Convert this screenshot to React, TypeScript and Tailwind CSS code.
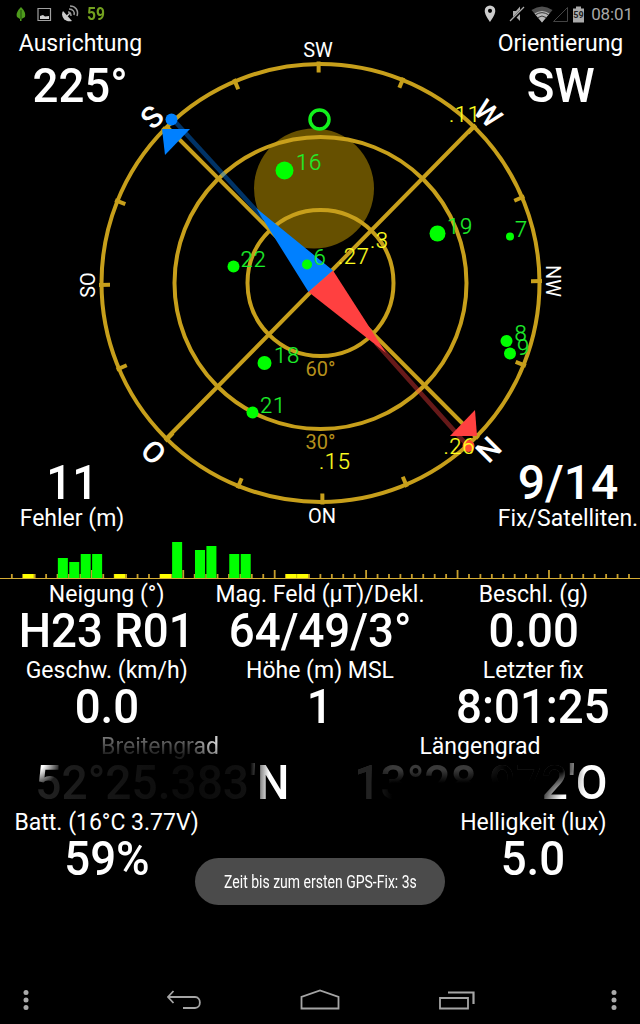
import clsx from "clsx";

const satellites = [
  { id: 16, x: 284.5, y: 170.5, r: 9, tx: 296, ty: 170 },
  { id: 19, x: 437.5, y: 233.5, r: 8, tx: 447, ty: 233.5 },
  { id: 7, x: 510, y: 236.5, r: 4, tx: 515, ty: 236.5 },
  { id: 22, x: 233.5, y: 266.5, r: 6, tx: 240.5, ty: 266.5 },
  { id: 6, x: 307, y: 264.5, r: 5, tx: 313.5, ty: 264.5 },
  { id: 8, x: 506.5, y: 341, r: 6, tx: 514.5, ty: 341 },
  { id: 9, x: 510, y: 353.5, r: 6, tx: 517, ty: 354.5 },
  { id: 18, x: 264.5, y: 363, r: 7, tx: 274, ty: 363 },
  { id: 21, x: 252.5, y: 412.5, r: 6, tx: 260, ty: 413 },
];

const unfixed = [
  { id: ".11", x: 449, y: 121.5 },
  { id: ".3", x: 370, y: 247.5 },
  { id: ".27", x: 338, y: 264 },
  { id: ".26", x: 443.5, y: 453.5 },
  { id: ".15", x: 319, y: 468.5 },
];

const labels = [
  { text: "S", x: 152, y: 117, angle: -45, size: 30, weight: 500 },
  { text: "W", x: 488, y: 113.5, angle: 45, size: 29, weight: 500 },
  { text: "N", x: 488.5, y: 449.5, angle: -45, size: 30, weight: 500 },
  { text: "O", x: 153.5, y: 452, angle: 45, size: 30, weight: 500 },
  { text: "SW", x: 318, y: 49.5, angle: 0, size: 20, weight: 400 },
  { text: "NW", x: 553, y: 281, angle: 90, size: 20, weight: 400 },
  { text: "SO", x: 87.5, y: 285, angle: -90, size: 20, weight: 400 },
  { text: "ON", x: 322, y: 516, angle: 0, size: 20, weight: 400 },
];

// signal strength per satellite slot, in pixels
const signals: Record<number, number> = {
  6: 20, 7: 16, 8: 24, 9: 24, 16: 36, 18: 28, 19: 32, 21: 24, 22: 24,
};
const weak = [3, 11, 15, 26, 27];
const SLOT = 640 / 56;

function Compass() {
  return (
    <svg viewBox="0 28 640 510" className="col-start-1 row-start-1 h-[510px] w-full" fontFamily="Roboto, sans-serif">
      <circle cx="314" cy="188.5" r="60" fill="#665000" />
      <g fill="none" stroke="#c79f1b" strokeWidth="4">
        <circle cx="320.5" cy="283" r="219" />
        <circle cx="320.5" cy="283" r="146" />
        <circle cx="320.5" cy="283" r="73" />
        <path d="M167 127L476 437M474 126L167 438" />
        <g transform="rotate(-0.5 320.5 283)">
          {Array.from({ length: 16 }, (_, i) => (
            <path key={i} d="M320.5 61.500v11" transform={`rotate(${i * 22.5} 320.5 283)`} />
          ))}
        </g>
      </g>
      <g fill="#b5901c" fontSize="20" textAnchor="middle">
        <text x="320.5" y="376">60°</text>
        <text x="320.5" y="449">30°</text>
      </g>
      <g fill="#fff" textAnchor="middle">
        {labels.map((l) => (
          <text key={l.text} fontSize={l.size} fontWeight={l.weight} transform={`translate(${l.x} ${l.y}) rotate(${l.angle})`} y={l.size * 0.355}>
            {l.text}
          </text>
        ))}
      </g>
      <path d="M174 120.500L264 219" stroke="#0080ff" strokeWidth="4.500" opacity="0.4" />
      <path d="M256 208L333 270.5L308.5 292Z" fill="#0080ff" />
      <path d="M162 129H190L165 155Z" fill="#0080ff" />
      <circle cx="171.5" cy="119.5" r="6" fill="#0080ff" />
      <path d="M376 343L467 445" stroke="#ff4040" strokeWidth="4.500" opacity="0.4" />
      <path d="M386 353L333 270.5L308.5 292Z" fill="#ff4040" />
      <path d="M475 410L477 436H450Z" fill="#ff4040" />
      <circle cx="468.5" cy="446" r="6" fill="#ff5030" />
      <circle cx="319.5" cy="119.5" r="9.5" fill="none" stroke="#12f01c" strokeWidth="3.5" />
      <g fill="#00ff00">
        {satellites.map((s) => (
          <circle key={s.id} cx={s.x} cy={s.y} r={s.r} />
        ))}
      </g>
      <g fontSize="22" fontWeight="300" letterSpacing="0.8" fill="#1ef02c" stroke="#1ef02c" strokeWidth="0.2">
        {satellites.map((s) => (
          <text key={s.id} x={s.tx} y={s.ty}>{s.id}</text>
        ))}
      </g>
      <g fontSize="22" fontWeight="300" letterSpacing="0.6" fill="#ffff20" stroke="#ffff20" strokeWidth="0.2">
        {unfixed.map((s) => (
          <text key={s.id} x={s.x} y={s.y}>{s.id}</text>
        ))}
      </g>
    </svg>
  );
}

function SignalChart() {
  return (
    <svg viewBox="0 538 640 42" className="h-[42px] w-full">
      {Array.from({ length: 55 }, (_, n) => n + 1).map((i) => (
        <rect key={i} x={i * SLOT - 0.5} y={i % 8 === 0 ? 570 : 574} width="1.8" height={i % 8 === 0 ? 8 : 4} fill="#c79f2c" />
      ))}
      {Object.entries(signals).map(([id, h]) => (
        <rect key={id} x={(Number(id) - 1) * SLOT + 0.7} y={578 - h} width="10" height={h} fill="#00ff00" />
      ))}
      {weak.map((id) => (
        <rect key={id} x={(id - 1) * SLOT} y="574" width="11" height="4" fill="#ffff00" />
      ))}
      <rect y="578" width="640" height="1" fill="#d5ad35" />
    </svg>
  );
}

function Reading({ label, value, className }: { label: string; value: string; className?: string }) {
  return (
    <div className={clsx("flex flex-col items-center whitespace-nowrap", className)}>
      <span className="text-[23px] leading-7">{label}</span>
      <span className="scale-x-95 text-[48px] font-medium leading-[44px]">{value}</span>
    </div>
  );
}

function StatusBar() {
  return (
    <header className="flex h-7 items-center justify-between pl-[15px] pr-[7px]">
      <div className="flex items-center">
        <svg width="12" height="16" viewBox="0 0 12 16">
          <path d="M6 1C2 5 1 8 2 11L5 13V15H6.500V13L10 11C11 7 9 4 6 1Z" fill="#4d9a1c" />
          <path d="M6 4V13" stroke="#1d4a08" />
        </svg>
        <svg className="ml-[10px]" width="15" height="15" viewBox="0 0 15 15">
          <path d="M1 1.500H13.500V13.500H1Z" fill="none" stroke="#a0a0a0" strokeWidth="1.200" />
          <path d="M3 12V9L6 8L8 9.500L12 9V12Z" fill="#d0d0d0" />
        </svg>
        <svg className="ml-[9px]" width="19" height="18" viewBox="0 0 19 18">
          <path d="M2 6C-1 11 4 18 11 16Z" fill="#ccc" />
          <path d="M6 11L9 8" stroke="#ccc" strokeWidth="1.500" />
          <path d="M7 7C9 7 10 9 10 11M8 4C12 4 14 7 13 10M9 1C14 1 18 5 16 11" fill="none" stroke="#999" strokeWidth="1.500" />
        </svg>
        <span className="ml-[7px] origin-left scale-x-[0.82] text-[19px] font-bold leading-7 text-[#73a01f]">59</span>
      </div>
      <div className="flex items-center">
        <svg width="12" height="18" viewBox="0 0 12 18">
          <path d="M6 0.500A5.300 5.300 0 0 0 0.700 6C0.700 10 6 17 6 17S11.300 10 11.300 6A5.300 5.300 0 0 0 6 0.500ZM6 3.800A2 2 0 1 1 6 7.900A2 2 0 1 1 6 3.800Z" fill="#ccc" fillRule="evenodd" />
        </svg>
        <svg className="ml-[13px]" width="17" height="18" viewBox="0 0 17 18">
          <path d="M4 6H7L11 1.500V16L7 12H4Z" fill="#aaa" />
          <path d="M15 3L1 17" stroke="#000" strokeWidth="3" />
          <path d="M15 2L1 16" stroke="#aaa" strokeWidth="1.300" />
        </svg>
        <svg className="ml-[5px]" width="22" height="17" viewBox="0 0 22 17">
          <path d="M0.500 4Q11 -3 21.500 4L11 16.500Z" fill="#505050" />
          <path d="M3.500 7.500Q11 2.500 18.500 7.500L11 16.500Z" fill="#b8b8b8" />
          <path d="M4.500 8.800Q11 4.500 17.500 8.800M7 11.500Q11 8.500 15 11.500" fill="none" stroke="#333" />
        </svg>
        <svg className="-ml-px" width="17" height="17" viewBox="0 0 17 17">
          <path d="M15.500 1.500V15.500H1.500Z" fill="none" stroke="#444" />
        </svg>
        <svg className="ml-[3px]" width="13" height="17" viewBox="0 0 13 17">
          <path d="M4 0.500H9V2.500H12V16.500H1V2.500H4Z" fill="#aaa" />
          <text x="6.500" y="11.500" textAnchor="middle" fontSize="9" fontWeight="700" fill="#222">59</text>
        </svg>
        <span className="ml-[6px] text-[17px] leading-7 tracking-[-0.1px] text-[#a8a8a8]">08:01</span>
      </div>
    </header>
  );
}

function MenuDots() {
  return (
    <svg width="6" height="22" viewBox="0 0 6 22" fill="#aaa">
      <circle cx="3" cy="3.500" r="2.500" />
      <circle cx="3" cy="11" r="2.500" />
      <circle cx="3" cy="18.500" r="2.500" />
    </svg>
  );
}

function NavBar() {
  return (
    <nav className="flex h-12 items-center justify-between px-[23px]">
      <MenuDots />
      <div className="flex items-center gap-[99px]">
        <svg width="36" height="22" viewBox="0 0 36 22" fill="none" stroke="#a5a5a5" strokeWidth="1.800">
          <path d="M8.500 2L3 8L8.500 14M3 8H30C36.500 8 36.500 19 30 19H18" />
        </svg>
        <svg width="40" height="22" viewBox="0 0 40 22" fill="none" stroke="#a5a5a5" strokeWidth="1.800">
          <path d="M1.500 19.500V8L20 1.500L38.500 8V19.500Z" />
        </svg>
        <svg width="36" height="22" viewBox="0 0 36 22" fill="none" stroke="#a5a5a5" strokeWidth="1.800">
          <path d="M1 9H29V19.500H1Z" />
          <path d="M9 3.500H34.500V15" strokeWidth="2.200" />
        </svg>
      </div>
      <MenuDots />
    </nav>
  );
}

export default function App() {
  return (
    <div className="relative flex h-[1024px] w-[640px] flex-col overflow-hidden bg-black font-[Roboto,sans-serif] text-white">
      <StatusBar />

      <section className="grid h-[510px]">
        <Compass />
        <div className="col-start-1 row-start-1 flex flex-col justify-between pt-[2px]">
          <div className="flex justify-between">
            <Reading label="Ausrichtung" value="225°" className="w-[161px] gap-1.5" />
            <Reading label="Orientierung" value="SW" className="w-[159px] gap-1.5" />
          </div>
          <div className="flex justify-between pb-[5px]">
            <div className="flex w-36 flex-col items-center">
              <span className="scale-x-95 text-[48px] font-medium leading-[44px]">11</span>
              <span className="text-[23px] leading-7">Fehler (m)</span>
            </div>
            <div className="flex w-36 flex-col items-center">
              <span className="text-[48px] font-medium leading-[44px]">9/14</span>
              <span className="text-[23px] leading-7">Fix/Satelliten.</span>
            </div>
          </div>
        </div>
      </section>

      <SignalChart />

      <section className="flex flex-1 flex-col gap-1 pt-px">
        <div className="grid grid-cols-3">
          <Reading label="Neigung (°)" value="H23 R01" />
          <Reading label="Mag. Feld (µT)/Dekl." value="64/49/3°" />
          <Reading label="Beschl. (g)" value="0.00" />
        </div>
        <div className="grid grid-cols-3">
          <Reading label="Geschw. (km/h)" value="0.0" />
          <Reading label="Höhe (m) MSL" value="1" />
          <Reading label="Letzter fix" value="8:01:25" />
        </div>
        <div className="grid grid-cols-2">
          <div className="flex flex-col items-center whitespace-nowrap">
            <span className="bg-[radial-gradient(circle_at_100%_30%,#ddd_0,transparent_30px),linear-gradient(#777_15%,#1c1c1c_80%)] bg-clip-text text-[23px] leading-7 text-transparent">
              Breitengrad
            </span>
            <span className="ml-1 scale-x-[0.96] bg-[radial-gradient(circle_at_0_0,#fff_10px,transparent_26px),linear-gradient(90deg,transparent_85%,#fff_92%),linear-gradient(90deg,#222,#131313_35%,#0a0a0a_60%,#161616)] bg-clip-text text-[48px] font-medium leading-[44px] text-transparent">
              52°25.383'N
            </span>
          </div>
          <div className="flex flex-col items-center whitespace-nowrap">
            <span className="text-[23px] leading-7">Längengrad</span>
            <span className="ml-0.5 scale-x-[0.96] bg-[radial-gradient(circle_at_84%_42px,#fff_8px,transparent_32px),linear-gradient(90deg,transparent_82%,#fff_91%),linear-gradient(90deg,#222_8%,transparent_15%),linear-gradient(90deg,transparent_45%,#000_60%),linear-gradient(#3a3a3a_20%,#000_50%)] bg-clip-text text-[48px] font-medium leading-[44px] text-transparent">
              13°28.972'O
            </span>
          </div>
        </div>
        <div className="grid grid-cols-3">
          <Reading label="Batt. (16°C 3.77V)" value="59%" />
          <Reading label="Helligkeit (lux)" value="5.0" className="col-start-3" />
        </div>
      </section>

      <div className="absolute left-[195px] top-[858px] flex h-[47px] w-[250px] items-center justify-center rounded-full bg-[#4b4b4b]">
        <span className="scale-x-[0.8] whitespace-nowrap pt-0.5 text-[17.5px]">Zeit bis zum ersten GPS-Fix: 3s</span>
      </div>

      <NavBar />
    </div>
  );
}
